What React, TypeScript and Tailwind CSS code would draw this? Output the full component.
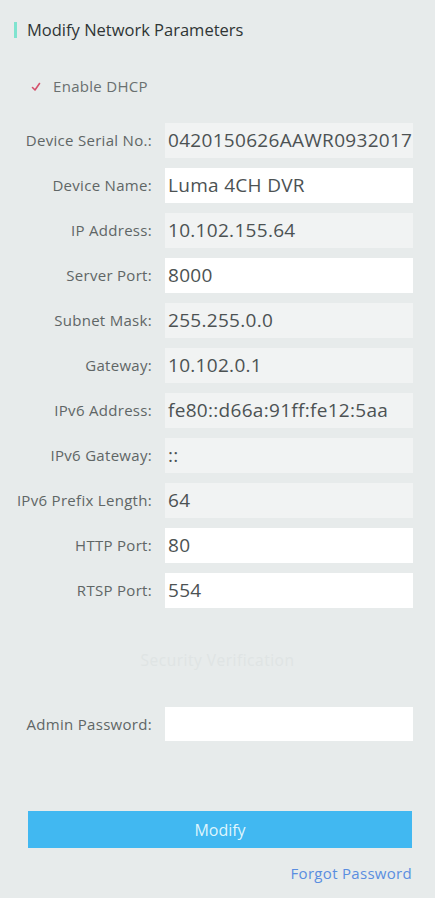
export default function App() {
  const fields = [
    { label: 'Device Serial No.:', value: '0420150626AAWR0932017', editable: false },
    { label: 'Device Name:', value: 'Luma 4CH DVR', editable: true },
    { label: 'IP Address:', value: '10.102.155.64', editable: false },
    { label: 'Server Port:', value: '8000', editable: true },
    { label: 'Subnet Mask:', value: '255.255.0.0', editable: false },
    { label: 'Gateway:', value: '10.102.0.1', editable: false },
    { label: 'IPv6 Address:', value: 'fe80::d66a:91ff:fe12:5aa', editable: false },
    { label: 'IPv6 Gateway:', value: '::', editable: false },
    { label: 'IPv6 Prefix Length:', value: '64', editable: false },
    { label: 'HTTP Port:', value: '80', editable: true },
    { label: 'RTSP Port:', value: '554', editable: true },
  ]

  return (
    <div
      className="w-[435px] h-[898px] bg-[#e7ebeb] overflow-hidden"
      style={{ fontFamily: '"Open Sans", "Noto Sans", sans-serif' }}
    >
      {/* header */}
      <div className="pt-[19px] pl-[14px] flex items-center h-[41px]">
        <div className="w-[3px] h-[16px] bg-[#7fe3cf]" />
        <span className="ml-[10px] text-[16.5px] leading-[22px] text-[#2f3535]">
          Modify Network Parameters
        </span>
      </div>

      {/* dhcp */}
      <div className="mt-[35px] h-[20px] pl-[31px] flex items-center">
        <svg width="10" height="10" viewBox="0 0 10 10" className="mt-[1px]">
          <path d="M1.5 5.5 L4 8 L8.5 1.5" fill="none" stroke="#d4506b" strokeWidth="1.6" strokeLinecap="round" strokeLinejoin="round" />
        </svg>
        <span className="ml-[12px] text-[15px] tracking-[0.3px] text-[#6a7070]">Enable DHCP</span>
      </div>

      {/* fields */}
      <div className="mt-[27px] grid grid-cols-[152px_248px] gap-x-[13px] gap-y-[10px]">
        {fields.map((f) => (
          <div key={f.label} className="contents">
            <div className="h-[35px] flex items-center justify-end text-[15px] tracking-[0.3px] text-[#5f6666] whitespace-nowrap">
              {f.label}
            </div>
            <div
              className={`h-[35px] flex items-center pl-[3px] overflow-hidden whitespace-nowrap text-[19px] tracking-[0.3px] text-[#4c5253] ${
                f.editable ? 'bg-white' : 'bg-[#f1f3f3]'
              }`}
            >
              {f.value}
            </div>
          </div>
        ))}
      </div>

      {/* security verification */}
      <div className="mt-[43px] h-[20px] flex items-center justify-center text-[15.5px] tracking-[0.5px] text-[#dfe4e4]">
        Security Verification
      </div>

      <div className="mt-[36px] grid grid-cols-[152px_248px] gap-x-[13px]">
        <div className="h-[34px] flex items-center justify-end text-[15px] tracking-[0.3px] text-[#5f6666] whitespace-nowrap">
          Admin Password:
        </div>
        <div className="h-[34px] bg-white" />
      </div>

      <div className="mt-[70px] ml-[28px] w-[384px] h-[37px] bg-[#41b8f1] flex items-center justify-center text-[16px] text-[#dff5fd]">
        Modify
      </div>

      <div className="mt-[15px] w-[412px] h-[20px] flex items-center justify-end text-[15px] tracking-[0.3px] text-[#5a8ee0]">
        Forgot Password
      </div>
    </div>
  )
}
